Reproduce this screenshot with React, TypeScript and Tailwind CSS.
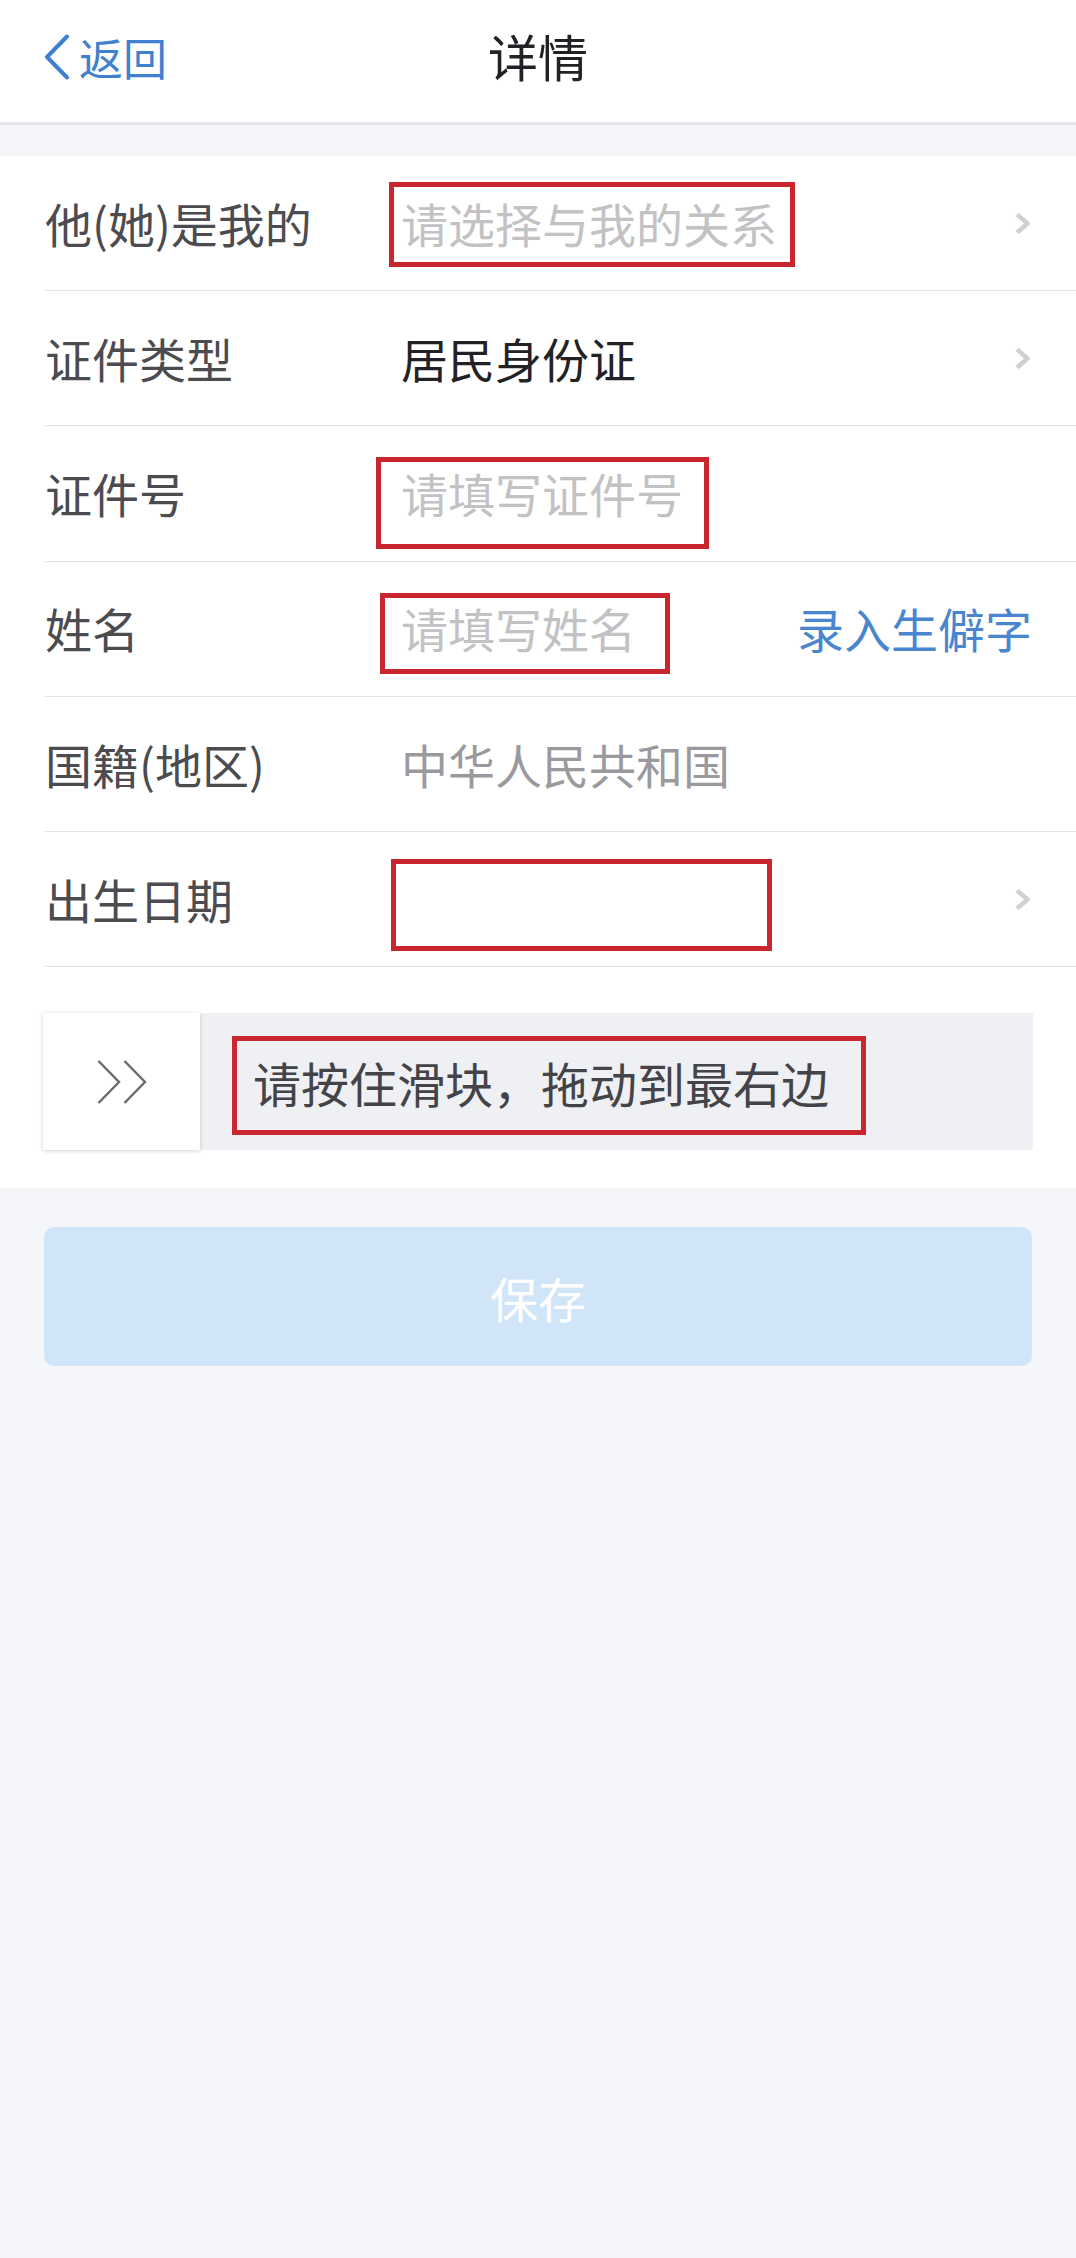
import type React from "react";

const FONT = {
	fontFamily: '"Noto Sans CJK SC", "Noto Sans", sans-serif',
};

type Row = {
	label: string;
	value: string;
	tone: "placeholder" | "filled" | "muted" | "empty";
	arrow?: boolean;
	action?: string;
	// annotation box drawn over the row (left, top, width, height)
	mark?: string;
};

const rows: Row[] = [
	{
		label: "他(她)是我的",
		value: "请选择与我的关系",
		tone: "placeholder",
		arrow: true,
		mark: "left-[344px] top-[26px] w-[406px] h-[85px]",
	},
	{ label: "证件类型", value: "居民身份证", tone: "filled", arrow: true },
	{
		label: "证件号",
		value: "请填写证件号",
		tone: "placeholder",
		mark: "left-[331px] top-[31px] w-[333px] h-[92px]",
	},
	{
		label: "姓名",
		value: "请填写姓名",
		tone: "placeholder",
		action: "录入生僻字",
		mark: "left-[335px] top-[31px] w-[290px] h-[81px]",
	},
	{ label: "国籍(地区)", value: "中华人民共和国", tone: "muted" },
	{
		label: "出生日期",
		value: "",
		tone: "empty",
		arrow: true,
		mark: "left-[346px] top-[27px] w-[381px] h-[92px]",
	},
];

const toneClass = {
	placeholder: "text-[#c2c2c4]",
	filled: "text-[#222226]",
	muted: "text-[#9a9a9e]",
	empty: "",
};

const ChevronRight: React.FC = () => (
	<svg width="17" height="23" viewBox="0 0 17 23" fill="none">
		<path
			d="M3 2.5 L13.5 11.5 L3 20.5"
			stroke="#d0d0d2"
			strokeWidth="4.5"
			strokeLinejoin="round"
		/>
	</svg>
);

const FormRow: React.FC<{ row: Row }> = ({ row }) => (
	<div className="relative ml-[45px] flex h-[135.2px] items-center border-b border-[#e4e4e6] pr-[44px]">
		<span className="w-[356px] shrink-0 text-[47px] text-[#4b4b50]">
			{row.label}
		</span>
		<span className={`flex-1 text-[47px] ${toneClass[row.tone]}`}>
			{row.value}
		</span>
		{row.action && (
			<span className="text-[47px] text-[#4a86cf]">{row.action}</span>
		)}
		{row.arrow && (
			<span className="mr-[1px] flex items-center">
				<ChevronRight />
			</span>
		)}
		{row.mark && (
			<span
				className={`pointer-events-none absolute border-[5px] border-[#c9262f] ${row.mark}`}
			/>
		)}
	</div>
);

const SlideVerify: React.FC = () => (
	<div className="relative mx-[43px] mt-[46px] flex h-[137px] bg-[#eff0f4]">
		<div className="flex w-[157px] shrink-0 items-center justify-center bg-white shadow-[0_1px_4px_rgba(0,0,0,0.18)]">
			<svg width="50" height="44" viewBox="0 0 50 44" fill="none">
				<path
					d="M1.5 1 L22 22 L1.5 43 M27.5 1 L48 22 L27.5 43"
					stroke="#6a6a6e"
					strokeWidth="2.4"
				/>
			</svg>
		</div>
		<div className="flex flex-1 items-center pl-[53px] text-[48px] text-[#444448]">
			请按住滑块，拖动到最右边
		</div>
		<span className="pointer-events-none absolute left-[189px] top-[23px] h-[99px] w-[634px] border-[5px] border-[#c9262f]" />
	</div>
);

export default function App() {
	return (
		<div className="min-h-screen bg-[#f5f6fa]" style={FONT}>
			{/* 顶部导航 */}
			<header className="relative flex h-[125px] items-center justify-center border-b-[3px] border-[#e6e6e8] bg-white pb-[12px]">
				<button
					type="button"
					className="absolute left-[43px] top-[34px] flex items-center gap-[9px] text-[#3f80cf]"
				>
					<svg width="27" height="46" viewBox="0 0 27 46" fill="none">
						<path
							d="M24 2.5 L4 23 L24 43.5"
							stroke="#3f80cf"
							strokeWidth="4"
							strokeLinecap="round"
							strokeLinejoin="round"
						/>
					</svg>
					<span className="text-[44px] leading-none">返回</span>
				</button>
				<h1 className="text-[50px] font-normal text-[#222226]">详情</h1>
			</header>

			<div className="h-[31px] bg-[#f5f6f9]" />

			{/* 表单 */}
			<section className="bg-white pb-[38px]">
				{rows.map((row) => (
					<FormRow key={row.label} row={row} />
				))}
				<SlideVerify />
			</section>

			<div className="px-[44px] pt-[39px]">
				<button
					type="button"
					className="flex h-[139px] w-full items-center justify-center rounded-[10px] bg-[#d1e5f8] text-[48px] text-white"
				>
					保存
				</button>
			</div>
		</div>
	);
}
